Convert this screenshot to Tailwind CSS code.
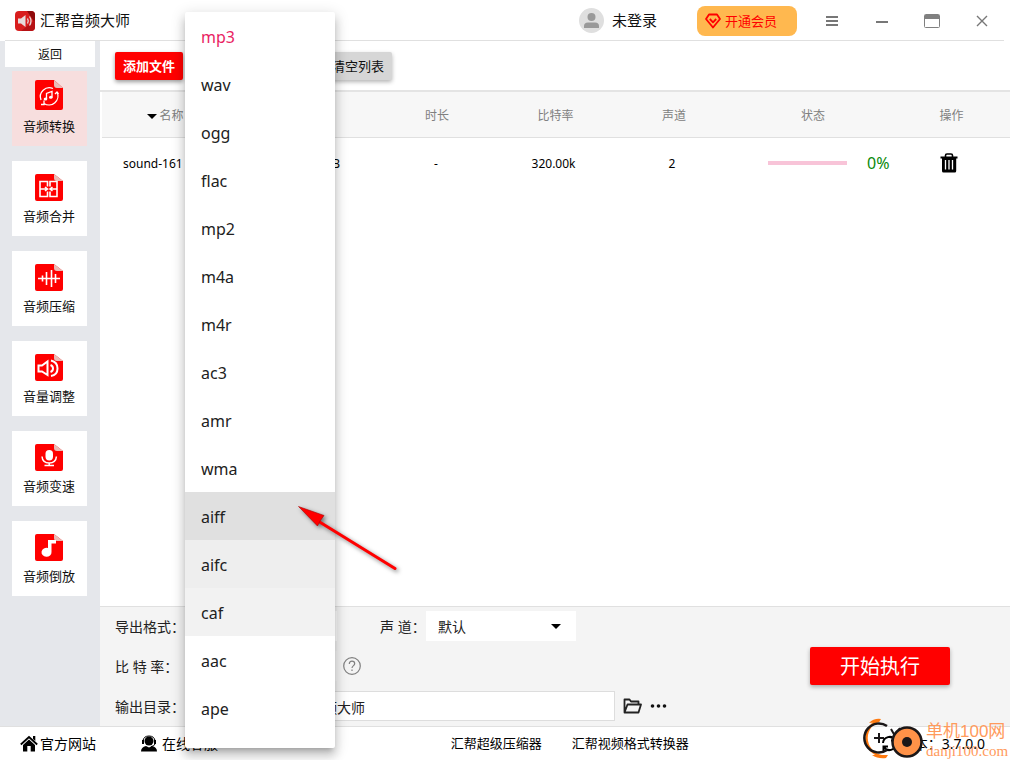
<!DOCTYPE html>
<html lang="zh-CN">
<head>
<meta charset="utf-8">
<title>汇帮音频大师</title>
<meta name="viewport" content="width=device-width, initial-scale=1">
<script src="https://cdn.jsdelivr.net/npm/@tailwindcss/browser@4"></script>
</head>
<body class="relative flex h-screen flex-col overflow-hidden bg-white font-['Noto_Sans','Noto_Sans_CJK_SC',sans-serif] text-sm text-[#111]">

<header class="flex h-10 shrink-0 items-center pr-[3px] pl-[15px]">
  <svg class="mt-0.5 size-5" viewBox="0 0 20 20" aria-hidden="true">
    <rect width="20" height="20" rx="4" fill="#d81e1e"/>
    <path d="M12 0h4a4 4 0 0 1 4 4v8z" fill="#8e0a0c"/>
    <path d="M20 9v7a4 4 0 0 1-4 4H6z" fill="#b51215"/>
    <path d="M3 7.500h3l4.500-3.500v12L6 12.500H3z" fill="#e6dcdc"/>
    <path d="M12.500 7.500q1.500 2.500 0 5M14.500 5.500q3 4.500 0 9" fill="none" stroke="#e6dcdc" stroke-width="1.300"/>
  </svg>
  <h1 class="mt-0.5 ml-[5px] text-[15px]">汇帮音频大师</h1>
  <button class="ml-auto flex items-center gap-2 text-[15px]">
    <svg class="size-[25px]" viewBox="0 0 25 25" aria-hidden="true">
      <circle cx="12.500" cy="12.500" r="12.500" fill="#dfdfdf"/>
      <circle cx="12.500" cy="9" r="4" fill="#999"/>
      <path d="M5 20v-2q0-3.500 4-3.500h7q4 0 4 3.500v2z" fill="#999"/>
    </svg>
    <span class="pt-0.5">未登录</span>
  </button>
  <button class="mt-0.5 mr-2.5 ml-10 flex h-[30px] w-[100px] items-center gap-1 rounded-lg bg-[#ffb84f] pl-2 text-[13px] text-[#f00]">
    <svg class="size-4" viewBox="0 0 16 16" fill="none" stroke="#f00" stroke-width="1.800" stroke-linejoin="round" aria-hidden="true">
      <path d="M4 1.500h8l3 4.500-7 8.500L1 6z"/><path d="M4.800 6L8 9.300 11.200 6"/>
    </svg>
    开通会员
  </button>
  <button aria-label="菜单" class="mt-0.5 grid h-10 w-[50px] place-items-center">
    <svg class="size-4" viewBox="0 0 16 16" stroke="#777" stroke-width="2" aria-hidden="true"><path d="M2 4h12M2 8h12M2 12h12"/></svg>
  </button>
  <button aria-label="最小化" class="mt-0.5 grid h-10 w-[50px] place-items-center">
    <svg class="size-4" viewBox="0 0 16 16" stroke="#777" stroke-width="2" aria-hidden="true"><path d="M2 9h12"/></svg>
  </button>
  <button aria-label="最大化" class="mt-0.5 grid h-10 w-[50px] place-items-center">
    <svg class="size-4" viewBox="0 0 16 16" fill="none" stroke="#808080" aria-hidden="true"><rect x=".5" y="1.500" width="15" height="13" rx="1"/><path d="M1 4h14" stroke-width="4"/></svg>
  </button>
  <button aria-label="关闭" class="mt-0.5 grid h-10 w-[50px] place-items-center">
    <svg class="size-4" viewBox="0 0 16 16" stroke="#777" stroke-width="1.400" aria-hidden="true"><path d="M3 3l10 10M13 3L3 13"/></svg>
  </button>
</header>
<div class="mr-1.5 ml-[5px] h-px shrink-0 bg-[#e0e0e0]"></div>

<div class="flex min-h-0 flex-1">
  <nav class="flex w-[100px] shrink-0 flex-col bg-[#e5e7eb]">
    <button class="ml-[5px] h-[26px] w-[90px] bg-white pt-0.5 text-xs">返回</button>
    <div class="mt-1 ml-3 flex flex-col gap-[15px] text-[13px]">
      <button class="flex size-[75px] flex-col items-center bg-[#f7dede] pt-[9px] pr-px">
        <svg class="h-[30px] w-7" viewBox="0 0 28 30" aria-hidden="true">
          <path d="M2 0h17l9 8v20q0 2-2 2H2q-2 0-2-2V2q0-2 2-2z" fill="#f00"/><path d="M19 0l9 8h-6q-3 0-3-3z" fill="#e8bdb8"/>
          <g fill="none" stroke="#fff" stroke-width="1.300"><path d="M6 20A9 9 0 0 1 18 8.500M22 12A9 9 0 0 1 9 23.500M9 20.500v4h-3M20 14l2-2 1.500 2"/><path d="M11.500 19v-5.500l5.500-2V17"/></g>
          <ellipse cx="10.500" cy="19" rx="1.800" ry="1.500" fill="#fff"/><ellipse cx="15.800" cy="17.300" rx="1.800" ry="1.500" fill="#fff"/>
        </svg>
        <span class="mt-1.5 leading-5">音频转换</span>
      </button>
      <button class="flex size-[75px] flex-col items-center bg-white pt-[13px] pr-px">
        <svg class="h-[27px] w-7" viewBox="0 0 28 27" aria-hidden="true">
          <path d="M2 0h17l9 7v18q0 2-2 2H2q-2 0-2-2V2q0-2 2-2z" fill="#f00"/><path d="M19 0l9 7h-6q-3 0-3-3z" fill="#e8bdb8"/>
          <path d="M5 12.500V7.500h7.500v5M5 12.500v10h7.500v-5M5 15h7M10 13l2.500 2L10 17M22 12.500V7.500h-7v5M22 12.500v10h-7v-5M22 15h-6M17.500 13L15 15l2.500 2" fill="none" stroke="#fff" stroke-width="1.600"/>
        </svg>
        <span class="mt-[5px] leading-5">音频合并</span>
      </button>
      <button class="flex size-[75px] flex-col items-center bg-white pt-[13px] pr-px">
        <svg class="h-[27px] w-7" viewBox="0 0 28 27" aria-hidden="true">
          <path d="M2 0h17l9 7v18q0 2-2 2H2q-2 0-2-2V2q0-2 2-2z" fill="#f00"/><path d="M19 0l9 7h-6q-3 0-3-3z" fill="#e8bdb8"/>
          <path d="M3 14.500h22M7.500 11.500v6M11.500 8v13M16.500 6v17M20.500 10v9" fill="none" stroke="#fff" stroke-width="1.600"/>
        </svg>
        <span class="mt-[5px] leading-5">音频压缩</span>
      </button>
      <button class="flex size-[75px] flex-col items-center bg-white pt-[13px] pr-px">
        <svg class="h-[27px] w-7" viewBox="0 0 28 27" aria-hidden="true">
          <path d="M2 0h17l9 7v18q0 2-2 2H2q-2 0-2-2V2q0-2 2-2z" fill="#f00"/><path d="M19 0l9 7h-6q-3 0-3-3z" fill="#e8bdb8"/>
          <path d="M3.500 11.500H7l5.500-4v13.500L7 17.500H3.500z" fill="none" stroke="#fff" stroke-width="2"/>
          <path d="M16 6.500q6.500 1.500 6.500 8T16 22M15.500 11q2.500 1 2.500 3.500t-2.500 3.500" fill="none" stroke="#fff" stroke-width="2"/>
        </svg>
        <span class="mt-[5px] leading-5">音量调整</span>
      </button>
      <button class="flex size-[75px] flex-col items-center bg-white pt-[13px] pr-px">
        <svg class="h-[27px] w-7" viewBox="0 0 28 27" aria-hidden="true">
          <path d="M2 0h17l9 7v18q0 2-2 2H2q-2 0-2-2V2q0-2 2-2z" fill="#f00"/><path d="M19 0l9 7h-6q-3 0-3-3z" fill="#e8bdb8"/>
          <rect x="10.500" y="6" width="7.500" height="10.500" rx="3.700" fill="#fff"/>
          <path d="M7 12.500q.5 6.500 7.200 6.500t7.200-6.500M14.200 19v2.500M9.500 21.500H19" fill="none" stroke="#fff" stroke-width="1.500"/>
        </svg>
        <span class="mt-[5px] leading-5">音频变速</span>
      </button>
      <button class="flex size-[75px] flex-col items-center bg-white pt-[13px] pr-px">
        <svg class="h-[27px] w-7" viewBox="0 0 28 27" aria-hidden="true">
          <path d="M2 0h17l9 7v18q0 2-2 2H2q-2 0-2-2V2q0-2 2-2z" fill="#f00"/><path d="M19 0l9 7h-6q-3 0-3-3z" fill="#e8bdb8"/>
          <path d="M13 6h8v3.500h-4.500V18a5 4.500 0 1 1-3.500-4z" fill="#fff"/>
        </svg>
        <span class="mt-[5px] leading-5">音频倒放</span>
      </button>
    </div>
  </nav>

  <main class="flex min-w-0 flex-1 flex-col">
    <div class="h-[49px] shrink-0 pt-[11px] pl-[15px]">
      <div class="flex w-[277px] justify-between text-[13px]">
        <button class="h-7 w-[68px] rounded-xs bg-[#f00] pt-px font-bold text-white shadow-[0_2px_4px_rgba(0,0,0,0.4)]">添加文件</button>
        <button class="h-7 w-[68px] rounded-xs bg-[#d6d6d6] pt-px shadow-[0_2px_4px_rgba(0,0,0,0.3)]">清空列表</button>
      </div>
    </div>
    <div class="min-h-0 flex-1 border-t-2 border-[#e4e4e4] pl-0.5">
      <table class="w-full table-fixed text-center text-[12px]">
        <colgroup><col class="w-[15.2%]"><col class="w-[15.2%]"><col class="w-[13%]"><col class="w-[13.1%]"><col class="w-[13%]"><col class="w-[17.6%]"><col></colgroup>
        <thead class="border-b border-[#e0e0e0] bg-[#f7f7f7] text-[#808080]">
          <tr class="h-[45px]">
            <th scope="col" class="pt-0.5 pr-3 font-normal"><svg class="mr-[3px] inline h-[5px] w-2.5" viewBox="0 0 10 5" aria-hidden="true"><path d="M0 0h10L5 5z" fill="#000"/></svg>名称</th>
            <th scope="col" class="pt-0.5 font-normal">大小</th>
            <th scope="col" class="pt-0.5 font-normal">时长</th>
            <th scope="col" class="pt-0.5 font-normal">比特率</th>
            <th scope="col" class="pt-0.5 font-normal">声道</th>
            <th scope="col" class="pt-0.5 font-normal">状态</th>
            <th scope="col" class="pt-0.5 font-normal">操作</th>
          </tr>
        </thead>
        <tbody>
          <tr class="h-[52px] text-black">
            <td class="truncate pl-[21px] text-left">sound-161</td>
            <td class="pr-[38px] text-right">MB</td>
            <td class="pr-0.5">-</td>
            <td class="pr-1">320.00k</td>
            <td class="pr-1">2</td>
            <td><div class="flex items-center gap-5 pl-[35px]"><div role="progressbar" aria-label="进度" aria-valuenow="0" class="h-1 w-[79px] bg-[#f8c4d8]"></div><span class="text-base text-[#0a8a0a]">0%</span></div></td>
            <td class="pr-1"><button aria-label="删除" class="align-middle">
              <svg class="h-5 w-[18px]" viewBox="0 0 18 20" aria-hidden="true"><path d="M5.500 4V2.500q0-1.500 1.500-1.500h4q1.500 0 1.500 1.500V4" fill="none" stroke="#000" stroke-width="1.600"/><path d="M.5 3.500h17v2h-1.300V18q0 1.500-1.500 1.500H3.500Q2 19.500 2 18V5.500H.5z"/><path d="M5.500 7v9.500M9 7v9.500M12.500 7v9.500" stroke="#fff" stroke-width="1.300"/></svg>
            </button></td>
          </tr>
        </tbody>
      </table>
    </div>

    <section class="flex h-[120px] shrink-0 items-center justify-between border-t border-[#e0e0e0] bg-[#f4f4f4] pr-[60px] pb-0.5 pl-[15px] text-[#222]">
      <div class="flex flex-col gap-2.5">
        <div class="flex h-[30px] items-center">
          <label for="format" class="w-[72px] pt-0.5">导出格式：</label>
          <select id="format" class="h-[30px] w-[150px] appearance-none bg-white pl-3"><option>mp3</option></select>
          <label for="channel" class="ml-[43px] w-[46px] pt-0.5">声 道：</label>
          <div class="relative">
            <select id="channel" class="h-[30px] w-[150px] appearance-none bg-white pt-0.5 pl-3"><option>默认</option></select>
            <svg class="pointer-events-none absolute top-[13px] right-[15px] h-[5px] w-2.5" viewBox="0 0 10 5" aria-hidden="true"><path d="M0 0h10L5 5z"/></svg>
          </div>
        </div>
        <div class="flex h-[30px] items-center">
          <label for="bitrate" class="w-[72px] pt-0.5">比 特 率：</label>
          <select id="bitrate" class="h-[30px] w-[150px] appearance-none bg-[#f8f8f8] pl-3"><option>320k</option></select>
          <button aria-label="帮助" class="ml-1.5">
            <svg class="size-[18px]" viewBox="0 0 18 18" fill="none" stroke="#808080" stroke-width="1.200" aria-hidden="true"><circle cx="9" cy="9" r="8.300"/><path d="M6.300 7q0-2.800 2.700-2.800t2.700 2.600c0 1.800-2.700 1.900-2.700 4.200M9 12.500V14"/></svg>
          </button>
        </div>
        <div class="flex h-[30px] items-center">
          <label for="output" class="w-[72px] pt-0.5">输出目录：</label>
          <input id="output" type="text" value="汇帮音频大师" class="h-[30px] w-[428px] border border-[#ddd] bg-white pt-0.5 pl-[93px]">
          <button aria-label="打开文件夹" class="ml-2">
            <svg class="h-4 w-[19px]" viewBox="0 0 19 16" fill="none" stroke="#222" stroke-width="1.800" stroke-linejoin="round" aria-hidden="true"><path d="M1.500 14.500V1.500h5l1.500 2h7.500V6M1.500 14.500L4.500 6.500H18l-2.500 8z"/></svg>
          </button>
          <button aria-label="更多" class="ml-2">
            <svg class="h-4 w-[18px]" viewBox="0 0 18 16" fill="#111" aria-hidden="true"><circle cx="2.500" cy="8" r="1.800"/><circle cx="8.500" cy="8" r="1.800"/><circle cx="14.500" cy="8" r="1.800"/></svg>
          </button>
        </div>
      </div>
      <button class="h-[38px] w-[140px] rounded-xs bg-[#f00] pt-0.5 text-xl text-white shadow-[0_2px_4px_rgba(0,0,0,0.3)]">开始执行</button>
    </section>
  </main>
</div>

<footer class="flex h-[34px] shrink-0 items-center border-t border-[#e0e0e0] pr-[25px] pl-5 text-black">
  <a href="#" class="flex items-center gap-0.5">
    <svg class="h-[17px] w-[18px]" viewBox="0 0 18 17" aria-hidden="true"><path d="M9 4.500l6 5.500v6.500h-4.300V11H7.300v5.500H3V10z"/><path d="M.8 9.500L9 2l8.200 7.500" fill="none" stroke="#000" stroke-width="1.800"/><path d="M13 1h2.300v5L13 4z"/></svg>
    官方网站
  </a>
  <a href="#" class="ml-11 flex items-center gap-1">
    <svg class="h-[17px] w-[18px]" viewBox="0 0 18 17" aria-hidden="true"><circle cx="9" cy="6" r="4.500"/><path d="M3 7.500V6q.5-5 6-5t6 5v3q-1 2.500-4 2.500" fill="none" stroke="#000"/><path d="M2 5h2v4H2zM14 5h2v4h-2zM1 16.500q0-4.500 5-5.500l3 1.500 3-1.500q5 1 5 5.500z"/></svg>
    在线客服
  </a>
  <a href="#" class="mr-[30px] ml-auto text-[13px]">汇帮超级压缩器</a>
  <a href="#" class="text-[13px]">汇帮视频格式转换器</a>
  <button class="ml-[192px] flex items-center gap-0.5">
    <svg class="size-[17px]" viewBox="0 0 17 17" fill="none" stroke="#000" stroke-width="2" aria-hidden="true"><path d="M2 8a6.500 6.500 0 0 1 12-3M15 9a6.500 6.500 0 0 1-12 3M14.500 1v4.500H10M2.500 16v-4.500H7"/></svg>
    <span>版本：3.7.0.0</span>
  </button>
</footer>

<!-- Open list of export formats -->
<ul role="listbox" aria-label="导出格式" class="absolute top-3 left-[185px] w-[150px] rounded-xs bg-white pb-4 text-base text-[#212121] shadow-[0_5px_5px_-3px_rgba(0,0,0,0.2),0_8px_10px_1px_rgba(0,0,0,0.14),0_3px_14px_2px_rgba(0,0,0,0.12)]">
  <li role="option" aria-selected="true" class="flex h-12 items-center px-4 pt-0.5 text-[#e91e63]">mp3</li>
  <li role="option" class="flex h-12 items-center px-4 pt-0.5">wav</li>
  <li role="option" class="flex h-12 items-center px-4 pt-0.5">ogg</li>
  <li role="option" class="flex h-12 items-center px-4 pt-0.5">flac</li>
  <li role="option" class="flex h-12 items-center px-4 pt-0.5">mp2</li>
  <li role="option" class="flex h-12 items-center px-4 pt-0.5">m4a</li>
  <li role="option" class="flex h-12 items-center px-4 pt-0.5">m4r</li>
  <li role="option" class="flex h-12 items-center px-4 pt-0.5">ac3</li>
  <li role="option" class="flex h-12 items-center px-4 pt-0.5">amr</li>
  <li role="option" class="flex h-12 items-center px-4 pt-0.5">wma</li>
  <li role="option" class="flex h-12 items-center bg-[#e0e0e0] px-4 pt-0.5">aiff</li>
  <li role="option" class="flex h-12 items-center bg-[#eee] px-4 pt-0.5">aifc</li>
  <li role="option" class="flex h-12 items-center bg-[#f2f2f2] px-4 pt-0.5">caf</li>
  <li role="option" class="flex h-12 items-center px-4 pt-0.5">aac</li>
  <li role="option" class="flex h-12 items-center px-4 pt-0.5">ape</li>
</ul>

<!-- Pointer arrow -->
<svg class="pointer-events-none absolute top-[500px] left-[290px] h-20 w-[120px] drop-shadow-[2px_2px_2px_rgba(0,0,0,0.5)]" viewBox="0 0 120 80" aria-hidden="true">
  <path d="M28 21L105 68.500" stroke="#f00" stroke-width="3" stroke-linecap="round"/>
  <path d="M8.500 6.500L34 15.500l-4 5.500-2.500 5z" fill="#f00" stroke="#a00" stroke-width=".6"/>
</svg>

<!-- Site watermark -->
<div class="pointer-events-none absolute right-0.5 bottom-0 flex items-end gap-0.5">
  <svg class="h-[42px] w-[63px]" viewBox="0 0 63 42" fill="none" aria-hidden="true">
    <path d="M18 2.500A18.500 18.500 0 0 0 24 38.500" stroke="#ff7a10" stroke-width="2.500"/>
    <path d="M8 5q5-5 12-4l-2 3zM11 37q6 4 14 3l2-3z" fill="#ff7a10"/>
    <path d="M26 8A14.500 14.500 0 1 0 26 32" stroke="#1b1718" stroke-width="2.500"/>
    <path d="M13 20h10M18 15v10M30 11l4 7M39 10l-4 6" stroke="#1b1718" stroke-width="2"/>
    <circle cx="46" cy="24" r="14.500" fill="#ff9248" stroke="#1b1718" stroke-width="2.500"/>
    <circle cx="46" cy="24" r="5" fill="#1b1718"/>
  </svg>
  <div class="w-[82px] whitespace-nowrap text-[#ff9a5c]">
    <div class="font-['Liberation_Sans','Noto_Sans_CJK_SC',sans-serif] text-[17px] leading-5">单机100网</div>
    <div class="font-['Liberation_Serif',serif] text-[15px] leading-[18px]">danji100.com</div>
  </div>
</div>
</body>
</html>
